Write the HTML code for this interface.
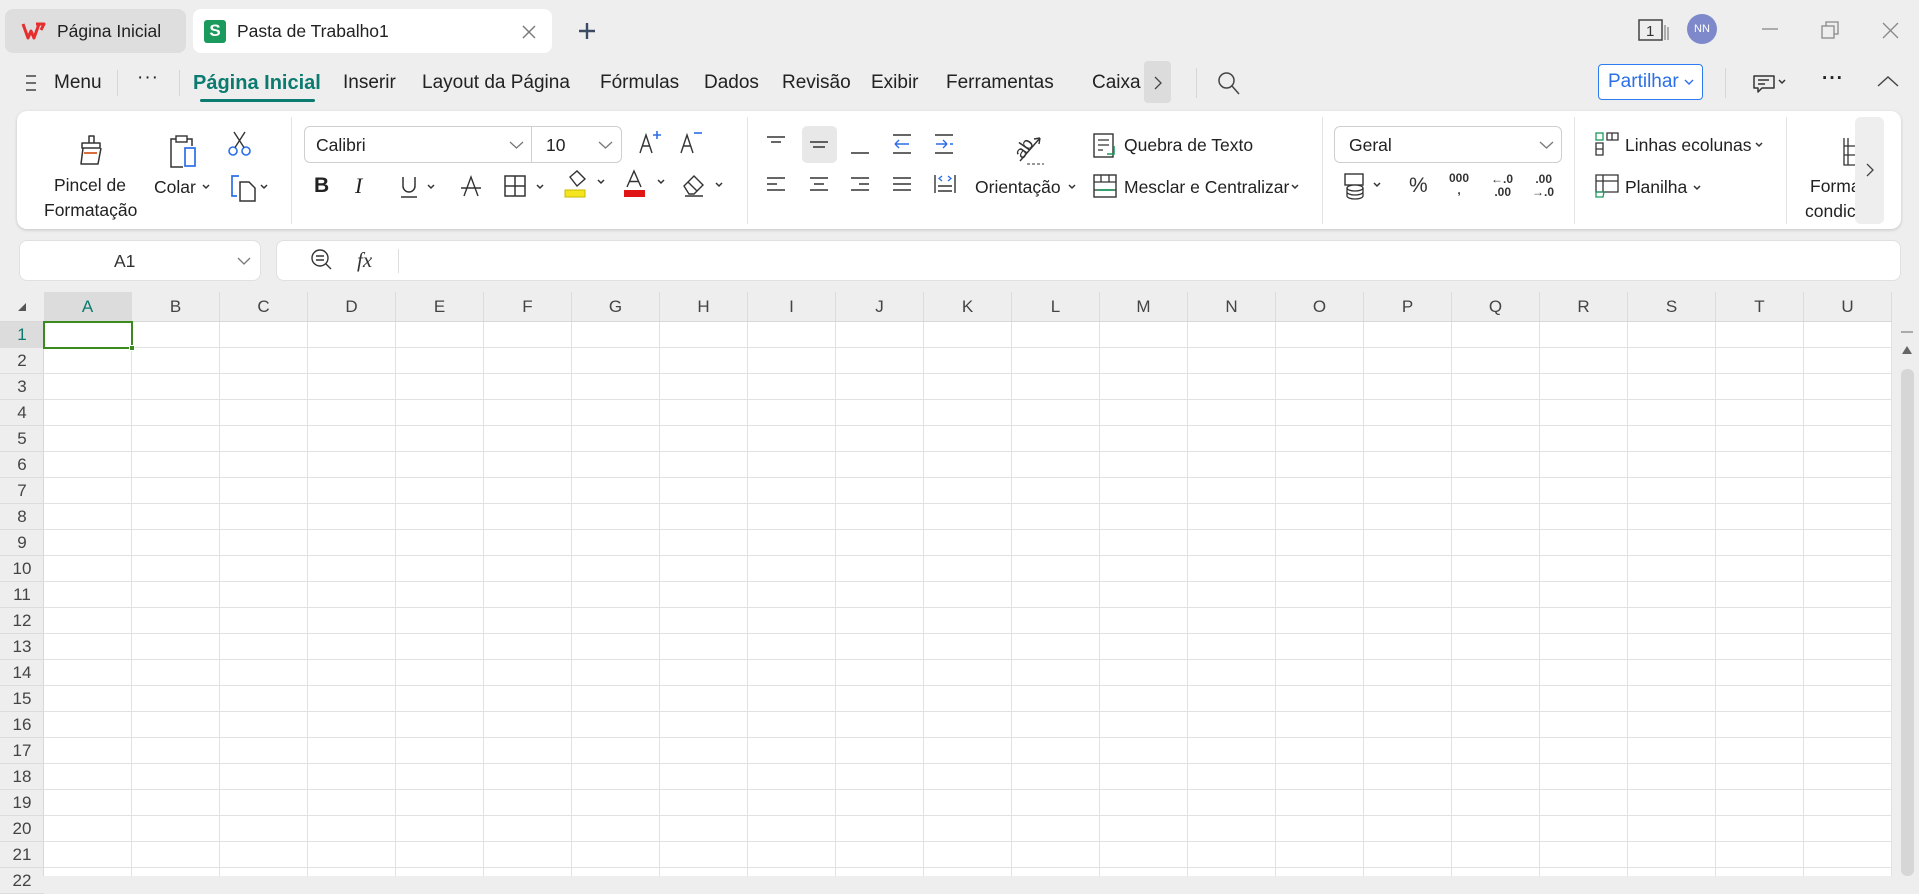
<!DOCTYPE html>
<html><head><meta charset="utf-8">
<style>
*{box-sizing:border-box;margin:0;padding:0}
body{width:1919px;height:876px;overflow:hidden;background:#eeeeee;font-family:"Liberation Sans",sans-serif;color:#222;position:relative}
.a{position:absolute;white-space:nowrap}
.t{font-size:17.5px;line-height:20px}
.m{font-size:19px;line-height:22px;color:#222}
svg{position:absolute;overflow:visible}
.dv{position:absolute;width:1px;background:#d6d6d6}
.ch{font-size:17px;color:#444;text-align:center;line-height:29px;height:29px;width:88px;position:absolute;top:292px;border-right:1px solid #dcdcdc}
.rh{position:absolute;left:0;width:44px;height:26px;line-height:26px;text-align:center;font-size:17px;color:#444;border-bottom:1px solid #dcdcdc}
</style></head><body>
<!-- tabs -->
<div class="a" style="left:5px;top:9px;width:181px;height:44px;background:#dedede;border-radius:8px"></div>
<svg style="left:22px;top:22px" width="24" height="18" viewBox="0 0 24 18"><path d="M1 2 L6 16 L9 9 L12 16 L17 2 M14 2 H22 L19 8" fill="none" stroke="#e62e2e" stroke-width="3" stroke-linejoin="round"/></svg>
<div class="a t" style="left:57px;top:21px;color:#222">Página Inicial</div>
<div class="a" style="left:193px;top:9px;width:359px;height:44px;background:#fff;border-radius:8px"></div>
<div class="a" style="left:204px;top:20px;width:22px;height:23px;background:#1a9a5c;border-radius:3px;color:#fff;font-weight:bold;font-size:17px;text-align:center;line-height:22px">S</div>
<div class="a t" style="left:237px;top:21px">Pasta de Trabalho1</div>
<svg style="left:522px;top:25px" width="14" height="14"><path d="M1 1L13 13M13 1L1 13" stroke="#777" stroke-width="1.4"/></svg>
<svg style="left:578px;top:22px" width="18" height="18"><path d="M9 1V17M1 9H17" stroke="#3c4a66" stroke-width="2.4"/></svg>
<!-- window controls -->
<svg style="left:1638px;top:19px" width="32" height="22"><rect x="1" y="1" width="23" height="20" fill="none" stroke="#444" stroke-width="1.5"/><text x="8" y="17" font-size="15" font-family="Liberation Sans" fill="#333">1</text><path d="M27 6V21M30 8V21" stroke="#888" stroke-width="1.3"/></svg>
<div class="a" style="left:1687px;top:14px;width:30px;height:30px;border-radius:50%;background:#7e89cc;color:#fff;font-size:11px;text-align:center;line-height:30px">NN</div>
<svg style="left:1762px;top:28px" width="16" height="2"><path d="M0 1H16" stroke="#888" stroke-width="1.3"/></svg>
<svg style="left:1821px;top:21px" width="18" height="18"><rect x="1" y="5" width="12" height="12" fill="none" stroke="#888" stroke-width="1.3"/><path d="M5 5V1H17V13H13" fill="none" stroke="#888" stroke-width="1.3"/></svg>
<svg style="left:1883px;top:23px" width="15" height="15"><path d="M0 0L15 15M15 0L0 15" stroke="#888" stroke-width="1.3"/></svg>
<!-- menu row -->
<svg style="left:26px;top:75px" width="10" height="16"><path d="M0 1H10M0 8H10M0 15H10" stroke="#444" stroke-width="1.4"/></svg>
<div class="a m" style="left:54px;top:72px">Menu</div>
<div class="dv" style="left:117px;top:70px;height:26px"></div>
<div class="a m" style="left:137px;top:67px;letter-spacing:1px">···</div>
<div class="dv" style="left:179px;top:70px;height:26px"></div>
<div class="a m" style="left:193px;top:72px;color:#0b7a6f;font-weight:bold;font-size:20px">Página Inicial</div>
<div class="a" style="left:200px;top:99px;width:115px;height:3px;background:#0b7a6f;border-radius:2px"></div>
<div class="a m" style="left:343px;top:72px">Inserir</div>
<div class="a m" style="left:422px;top:72px">Layout da Página</div>
<div class="a m" style="left:600px;top:72px">Fórmulas</div>
<div class="a m" style="left:704px;top:72px">Dados</div>
<div class="a m" style="left:782px;top:72px">Revisão</div>
<div class="a m" style="left:871px;top:72px">Exibir</div>
<div class="a m" style="left:946px;top:72px">Ferramentas</div>
<div class="a m" style="left:1092px;top:72px">Caixa</div>
<div class="a" style="left:1144px;top:61px;width:27px;height:42px;background:#dcdcdc;border-radius:4px"></div>
<svg style="left:1154px;top:76px" width="8" height="14"><path d="M1 1L7 7L1 13" fill="none" stroke="#444" stroke-width="1.3"/></svg>
<div class="dv" style="left:1196px;top:68px;height:30px"></div>
<svg style="left:1218px;top:72px" width="22" height="22"><circle cx="8.5" cy="8.5" r="7.5" fill="none" stroke="#444" stroke-width="1.5"/><path d="M14 14L21 22" stroke="#444" stroke-width="1.5"/></svg>
<div class="a" style="left:1598px;top:64px;width:105px;height:36px;border:1.5px solid #2c7bf2;border-radius:4px;background:#fff"></div>
<div class="a m" style="left:1608px;top:71px;color:#2c6fe6">Partilhar</div>
<svg style="left:1684px;top:79px" width="10" height="6"><path d="M1 1L5 5L9 1" fill="none" stroke="#2c6fe6" stroke-width="1.4"/></svg>
<div class="dv" style="left:1725px;top:68px;height:30px"></div>
<svg style="left:1753px;top:74px" width="34" height="20"><path d="M1 2H21V14H9L5 18V14H1Z" fill="none" stroke="#333" stroke-width="1.5" stroke-linejoin="round"/><path d="M5 6H16M5 10H12" stroke="#333" stroke-width="1.4"/><path d="M26 6L29 9L32 6" fill="none" stroke="#333" stroke-width="1.5"/></svg>
<div class="a m" style="left:1822px;top:68px;letter-spacing:1px;font-weight:bold">···</div>
<svg style="left:1877px;top:76px" width="22" height="11"><path d="M1 10L11 1L21 10" fill="none" stroke="#444" stroke-width="1.4"/></svg>
<!-- ribbon -->
<div class="a" style="left:17px;top:111px;width:1884px;height:118px;background:#fff;border-radius:10px;box-shadow:0 1px 3px rgba(0,0,0,.18)"></div>
<svg style="left:78px;top:134px" width="28" height="32"><path d="M11 9V2H16V9M4 9H22V14H4Z M5 14L3 30H20L23 14" fill="none" stroke="#333" stroke-width="1.5" stroke-linejoin="round"/><path d="M6 19H19" stroke="#d0541c" stroke-width="1.7"/></svg>
<div class="a t" style="left:54px;top:175px">Pincel de</div>
<div class="a t" style="left:44px;top:200px">Formatação</div>
<svg style="left:168px;top:134px" width="30" height="34"><path d="M8 5H3V33H15 M19 5H24V12" fill="none" stroke="#333" stroke-width="1.5"/><rect x="8" y="2" width="11" height="6" fill="none" stroke="#333" stroke-width="1.4"/><rect x="17" y="14" width="10" height="18" fill="none" stroke="#2c6fe6" stroke-width="1.7"/></svg>
<div class="a t" style="left:154px;top:177px">Colar</div>
<svg style="left:202px;top:184px" width="8" height="5"><path d="M1 1L4 4L7 1" fill="none" stroke="#333" stroke-width="1.5"/></svg>
<svg style="left:228px;top:132px" width="24" height="24"><circle cx="5" cy="19" r="4" fill="none" stroke="#2c6fe6" stroke-width="1.6"/><circle cx="18" cy="19" r="4" fill="none" stroke="#2c6fe6" stroke-width="1.6"/><path d="M7 15.5L17 0M16 15.5L6 0" stroke="#333" stroke-width="1.4"/></svg>
<svg style="left:230px;top:174px" width="40" height="28"><path d="M9 2H2V22H7" fill="none" stroke="#2c6fe6" stroke-width="1.7"/><path d="M10 8H19L25 14V27H10Z" fill="none" stroke="#333" stroke-width="1.5"/><path d="M31 11L34 14L37 11" fill="none" stroke="#333" stroke-width="1.5"/></svg>
<div class="dv" style="left:291px;top:117px;height:107px;background:#e4e4e4"></div>
<div class="a" style="left:304px;top:126px;width:318px;height:37px;border:1px solid #cfcfcf;border-radius:6px"></div>
<div class="dv" style="left:531px;top:127px;height:35px;background:#cfcfcf"></div>
<div class="a t" style="left:316px;top:135px">Calibri</div>
<div class="a t" style="left:546px;top:135px">10</div>
<svg style="left:509px;top:141px" width="15" height="8"><path d="M1 1L7.5 7L14 1" fill="none" stroke="#777" stroke-width="1.3"/></svg>
<svg style="left:598px;top:141px" width="15" height="8"><path d="M1 1L7.5 7L14 1" fill="none" stroke="#777" stroke-width="1.3"/></svg>
<svg style="left:639px;top:130px" width="24" height="24"><path d="M1 23L7 5L13 23M3.5 16H10.5" fill="none" stroke="#333" stroke-width="1.4"/><path d="M14 5H22M18 1V9" stroke="#2c6fe6" stroke-width="1.6"/></svg>
<svg style="left:680px;top:130px" width="24" height="24"><path d="M1 23L7 5L13 23M3.5 16H10.5" fill="none" stroke="#333" stroke-width="1.4"/><path d="M14 3H22" stroke="#2c6fe6" stroke-width="1.6"/></svg>
<div class="a" style="left:314px;top:174px;font-weight:bold;font-size:21px">B</div>
<div class="a" style="left:355px;top:173px;font-style:italic;font-size:22px;font-family:'Liberation Serif',serif">I</div>
<svg style="left:400px;top:176px" width="38" height="22"><path d="M3 1V10A6 6 0 0 0 15 10V1M1 21H17" fill="none" stroke="#333" stroke-width="1.5"/><path d="M28 9L31 12L34 9" fill="none" stroke="#333" stroke-width="1.5"/></svg>
<svg style="left:460px;top:175px" width="22" height="22"><path d="M4 21L11 2L18 21M1 13H21" fill="none" stroke="#333" stroke-width="1.4"/></svg>
<svg style="left:504px;top:175px" width="42" height="22"><rect x="1" y="1" width="20" height="20" fill="none" stroke="#333" stroke-width="1.5"/><path d="M11 1V21M1 11H21" stroke="#333" stroke-width="1.5"/><path d="M33 10L36 13L39 10" fill="none" stroke="#333" stroke-width="1.5"/></svg>
<svg style="left:564px;top:170px" width="42" height="28"><path d="M6 7L13 1L21 9L13 16Z" fill="none" stroke="#333" stroke-width="1.4"/><rect x="1" y="20" width="20" height="7" fill="#f5e51e" stroke="#c8b900"/><path d="M34 10L37 13L40 10" fill="none" stroke="#333" stroke-width="1.5"/></svg>
<svg style="left:623px;top:170px" width="42" height="28"><path d="M4 17L11 1L18 17M6.5 11.5H15.5" fill="none" stroke="#333" stroke-width="1.4"/><rect x="1" y="20" width="21" height="7" fill="#e01515"/><path d="M35 10L38 13L41 10" fill="none" stroke="#333" stroke-width="1.5"/></svg>
<svg style="left:683px;top:174px" width="42" height="24"><path d="M1 12L11 2L20 11L11 20H6Z M5 8L14 17 M2 22H20" fill="none" stroke="#333" stroke-width="1.4"/><path d="M33 9L36 12L39 9" fill="none" stroke="#333" stroke-width="1.5"/></svg>
<div class="dv" style="left:747px;top:117px;height:107px;background:#e4e4e4"></div>
<div class="a" style="left:802px;top:126px;width:35px;height:37px;background:#e8e8e8;border-radius:5px"></div>
<svg style="left:766px;top:134px" width="190" height="60"><g stroke="#333" stroke-width="1.4">
<path d="M1 3H19M5 8H15"/><path d="M44 8H62M47 13H59"/><path d="M85 19H103"/>
<path d="M127 1H145M127 19H145"/><path d="M169 1H187M169 19H187"/></g>
<path d="M129 10H143M129 10L133 6M129 10L133 14" fill="none" stroke="#2c6fe6" stroke-width="1.4"/><path d="M170 10H181M181 10L177 6M181 10L177 14M184 10H187" fill="none" stroke="#2c6fe6" stroke-width="1.4"/>
<g stroke="#333" stroke-width="1.4"><path d="M1 44H19M1 50H11M1 56H19"/><path d="M44 44H62M48 50H58M44 56H62"/><path d="M85 44H103M93 50H103M85 56H103"/><path d="M127 44H145M127 50H145M127 56H145"/><path d="M169 41V59M189 41V59M172 52H186M172 57H186"/></g>
<path d="M176 47L173 44.5L176 42M182 47L185 44.5L182 42" fill="none" stroke="#2c6fe6" stroke-width="1.3"/></svg>
<svg style="left:1009px;top:132px" width="36" height="34"><text x="3" y="23" font-size="18" font-family="Liberation Sans" fill="#333" transform="rotate(-55 13 15)">ab</text><path d="M11 29L31 6M31 6L25 7M31 6L30 12" fill="none" stroke="#333" stroke-width="1.4"/><path d="M18 32H35" stroke="#333" stroke-dasharray="3 2"/></svg>
<div class="a t" style="left:975px;top:177px">Orientação</div>
<svg style="left:1068px;top:184px" width="8" height="5"><path d="M1 1L4 4L7 1" fill="none" stroke="#333" stroke-width="1.5"/></svg>
<svg style="left:1093px;top:133px" width="24" height="25"><rect x="1" y="1" width="19" height="23" fill="none" stroke="#333" stroke-width="1.4"/><path d="M5 7H16M5 12H16M5 17H10" stroke="#333" stroke-width="1.3"/><path d="M21 13V21H14" fill="none" stroke="#1a9a5c" stroke-width="1.5"/></svg>
<div class="a t" style="left:1124px;top:135px">Quebra de Texto</div>
<svg style="left:1093px;top:174px" width="24" height="25"><rect x="1" y="1" width="22" height="22" fill="none" stroke="#333" stroke-width="1.4"/><path d="M1 8H23M8 1V8M16 1V8M1 16H23" stroke="#333" stroke-width="1.3"/><path d="M4 16H20" stroke="#1a9a5c" stroke-width="1.7"/></svg>
<div class="a t" style="left:1124px;top:177px">Mesclar e Centralizar</div>
<svg style="left:1291px;top:184px" width="8" height="5"><path d="M1 1L4 4L7 1" fill="none" stroke="#333" stroke-width="1.5"/></svg>
<div class="dv" style="left:1322px;top:117px;height:107px;background:#e4e4e4"></div>
<div class="a" style="left:1334px;top:126px;width:228px;height:37px;border:1px solid #cfcfcf;border-radius:6px"></div>
<div class="a t" style="left:1349px;top:135px">Geral</div>
<svg style="left:1539px;top:141px" width="15" height="8"><path d="M1 1L7.5 7L14 1" fill="none" stroke="#777" stroke-width="1.3"/></svg>
<svg style="left:1344px;top:173px" width="40" height="28"><rect x="1" y="1" width="18" height="11" fill="none" stroke="#333" stroke-width="1.4"/><ellipse cx="11" cy="15" rx="8" ry="3" fill="#fff" stroke="#333" stroke-width="1.3"/><path d="M3 15V23A8 3 0 0 0 19 23V15M3 19A8 3 0 0 0 19 19" fill="none" stroke="#333" stroke-width="1.3"/><path d="M30 10L33 13L36 10" fill="none" stroke="#333" stroke-width="1.5"/></svg>
<div class="a" style="left:1409px;top:174px;font-size:21px;color:#333">%</div>
<div class="a" style="left:1449px;top:172px;font-size:12px;font-weight:bold;color:#333;line-height:12px;text-align:center">000<br>,</div>
<div class="a" style="left:1491px;top:173px;font-size:12px;font-weight:bold;color:#333;line-height:13px">←.0<br>&nbsp;.00</div>
<div class="a" style="left:1532px;top:173px;font-size:12px;font-weight:bold;color:#333;line-height:13px">&nbsp;.00<br>→.0</div>
<div class="dv" style="left:1574px;top:117px;height:107px;background:#e4e4e4"></div>
<svg style="left:1595px;top:132px" width="25" height="25"><rect x="1" y="1" width="7" height="7" fill="none" stroke="#1a9a5c" stroke-width="1.3"/><path d="M12 1H23V8H12ZM17 1V8M1 11H8V23H1ZM1 17H8" fill="none" stroke="#333" stroke-width="1.3"/></svg>
<div class="a t" style="left:1625px;top:135px">Linhas ecolunas</div>
<svg style="left:1755px;top:142px" width="8" height="5"><path d="M1 1L4 4L7 1" fill="none" stroke="#333" stroke-width="1.5"/></svg>
<svg style="left:1595px;top:174px" width="25" height="25"><path d="M1 1H23V18H1ZM1 7H23M8 1V18" fill="none" stroke="#333" stroke-width="1.3"/><path d="M1 18H9L8 23H1Z" fill="none" stroke="#1a9a5c" stroke-width="1.3"/></svg>
<div class="a t" style="left:1625px;top:177px">Planilha</div>
<svg style="left:1693px;top:185px" width="8" height="5"><path d="M1 1L4 4L7 1" fill="none" stroke="#333" stroke-width="1.5"/></svg>
<div class="dv" style="left:1786px;top:117px;height:107px;background:#e4e4e4"></div>
<svg style="left:1843px;top:137px" width="14" height="30"><path d="M1 1V28H13M5 1V28M1 9H13M1 18H13" fill="none" stroke="#333" stroke-width="1.3"/></svg>
<div class="a t" style="left:1810px;top:176px;width:45px;overflow:hidden">Formatação</div>
<div class="a t" style="left:1805px;top:201px;width:50px;overflow:hidden">condicional</div>
<div class="a" style="left:1855px;top:117px;width:29px;height:107px;background:#eeeeee;border-radius:6px"></div>
<svg style="left:1866px;top:163px" width="8" height="14"><path d="M1 1L7 7L1 13" fill="none" stroke="#444" stroke-width="1.3"/></svg>
<!-- formula row -->
<div class="a" style="left:19px;top:240px;width:242px;height:41px;background:#fff;border:1px solid #e0e0e0;border-radius:8px"></div>
<div class="a t" style="left:114px;top:251px;color:#333">A1</div>
<svg style="left:237px;top:257px" width="14" height="8"><path d="M1 1L7 7L13 1" fill="none" stroke="#777" stroke-width="1.3"/></svg>
<div class="a" style="left:276px;top:240px;width:1625px;height:41px;background:#fff;border:1px solid #e0e0e0;border-radius:8px"></div>
<svg style="left:311px;top:249px" width="22" height="22"><circle cx="9" cy="9" r="8" fill="none" stroke="#333" stroke-width="1.4"/><path d="M5 7H13M5 11H13M15 15L20 20" stroke="#333" stroke-width="1.4"/></svg>
<div class="a" style="left:357px;top:248px;font-family:'Liberation Serif',serif;font-style:italic;font-size:21px;color:#333">fx</div>
<div class="dv" style="left:398px;top:249px;height:24px;background:#ddd"></div>
<!-- grid -->
<div class="a" style="left:0;top:292px;width:1892px;height:30px;background:#eeeeee;border-bottom:1px solid #d8d8d8"></div>
<div class="a" style="left:44px;top:292px;width:88px;height:29px;background:#dcdcdc"></div>
<svg style="left:17px;top:302px" width="10" height="10"><path d="M9 1V9H1Z" fill="#555"/></svg>
<div class="a" style="left:0;top:322px;width:44px;height:554px;background:#eeeeee;border-right:1px solid #d8d8d8"></div>
<div class="a" style="left:0;top:322px;width:44px;height:26px;background:#dcdcdc"></div>
<div class="a" style="left:44px;top:322px;width:1848px;height:554px;background-color:#fff;background-image:linear-gradient(to right,transparent 87px,#e1e1e1 87px),linear-gradient(to bottom,transparent 25px,#e1e1e1 25px);background-size:88px 26px"></div>
<div class="a" style="left:1892px;top:292px;width:27px;height:584px;background:#eeeeee"></div>
<div class="a" style="left:1901px;top:331px;width:12px;height:2px;background:#aaa"></div>
<svg style="left:1902px;top:346px" width="10" height="8"><path d="M5 0L10 8H0Z" fill="#666"/></svg>
<div class="a" style="left:1901px;top:369px;width:13px;height:507px;background:#d6d6d6;border-radius:6px"></div>
<div class="ch" style="left:44px;color:#0b7a6f">A</div><div class="ch" style="left:132px">B</div><div class="ch" style="left:220px">C</div><div class="ch" style="left:308px">D</div><div class="ch" style="left:396px">E</div><div class="ch" style="left:484px">F</div><div class="ch" style="left:572px">G</div><div class="ch" style="left:660px">H</div><div class="ch" style="left:748px">I</div><div class="ch" style="left:836px">J</div><div class="ch" style="left:924px">K</div><div class="ch" style="left:1012px">L</div><div class="ch" style="left:1100px">M</div><div class="ch" style="left:1188px">N</div><div class="ch" style="left:1276px">O</div><div class="ch" style="left:1364px">P</div><div class="ch" style="left:1452px">Q</div><div class="ch" style="left:1540px">R</div><div class="ch" style="left:1628px">S</div><div class="ch" style="left:1716px">T</div><div class="ch" style="left:1804px">U</div>
<div class="rh" style="top:322px;color:#0b7a6f">1</div><div class="rh" style="top:348px">2</div><div class="rh" style="top:374px">3</div><div class="rh" style="top:400px">4</div><div class="rh" style="top:426px">5</div><div class="rh" style="top:452px">6</div><div class="rh" style="top:478px">7</div><div class="rh" style="top:504px">8</div><div class="rh" style="top:530px">9</div><div class="rh" style="top:556px">10</div><div class="rh" style="top:582px">11</div><div class="rh" style="top:608px">12</div><div class="rh" style="top:634px">13</div><div class="rh" style="top:660px">14</div><div class="rh" style="top:686px">15</div><div class="rh" style="top:712px">16</div><div class="rh" style="top:738px">17</div><div class="rh" style="top:764px">18</div><div class="rh" style="top:790px">19</div><div class="rh" style="top:816px">20</div><div class="rh" style="top:842px">21</div><div class="rh" style="top:868px">22</div>
<div class="a" style="left:43px;top:321px;width:90px;height:28px;border:2.5px solid #3a8a1e"></div>
<div class="a" style="left:129px;top:345px;width:6px;height:6px;background:#3a8a1e;border:1px solid #fff"></div>
</body></html>
